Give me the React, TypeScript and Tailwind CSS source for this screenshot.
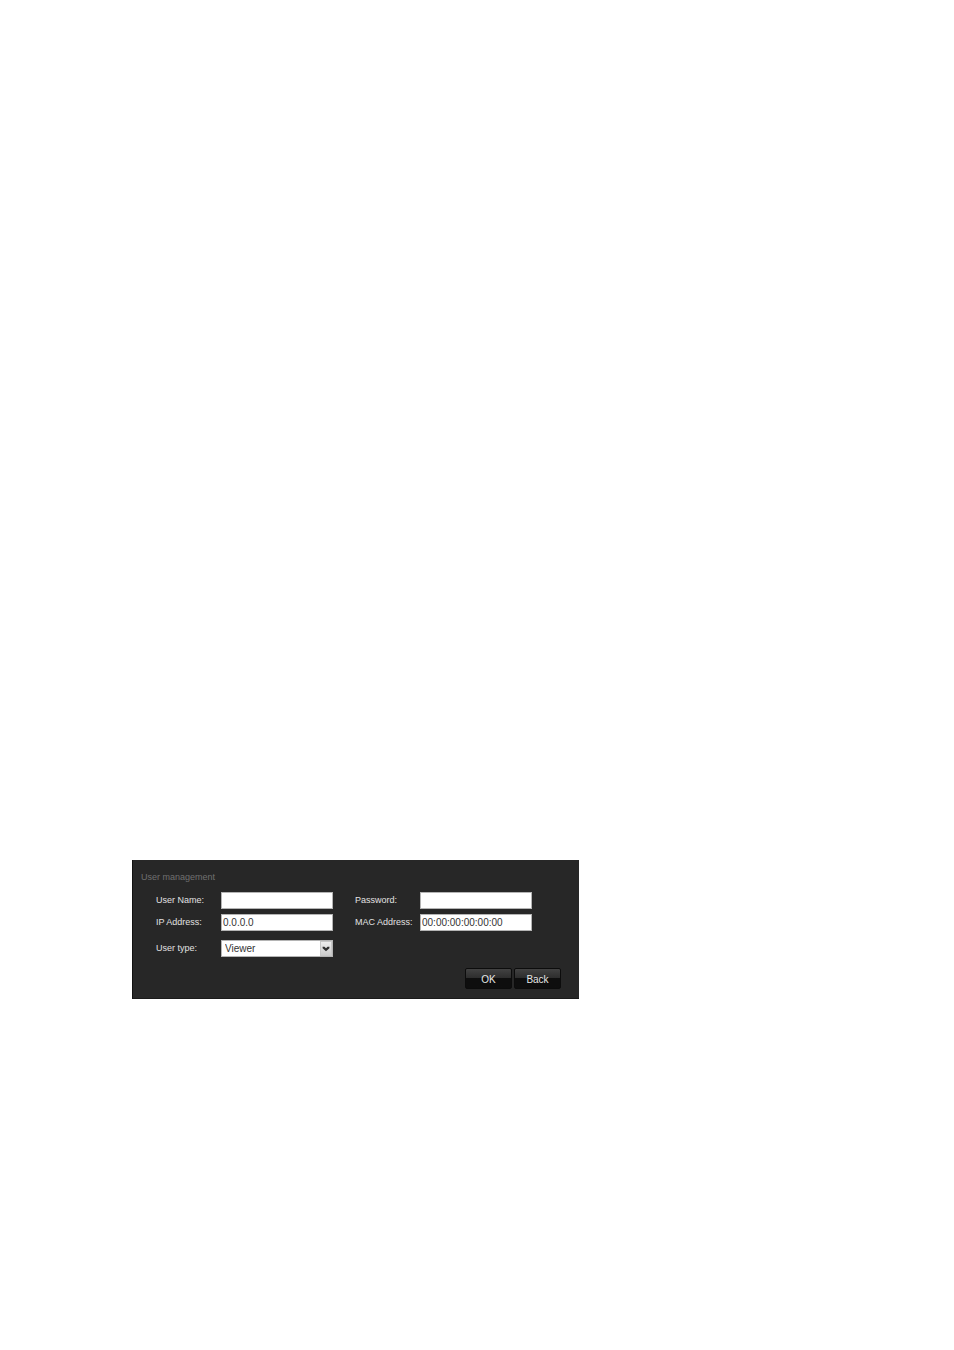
import { FormEvent, useState } from 'react';

const labelClass = 'w-[65px] shrink-0 whitespace-nowrap text-[9px] text-[#e2e2e2]';
const inputClass =
  'h-[17px] w-full min-w-0 border border-[#b4b4b4] bg-white px-px text-[10px] text-[#333333] outline-none';
const buttonClass =
  'h-[21px] w-[47px] rounded-xs border border-[#0c0c0c] bg-linear-to-b from-[#424242] from-0% via-[#2e2e2e] via-45% to-[#0e0e0e] to-50% pt-px text-[10px] text-[#e6e6e6]';

type FieldProps = {
  id: string;
  label: string;
  type?: string;
  value: string;
  onChange: (value: string) => void;
};

function Field({ id, label, type = 'text', value, onChange }: FieldProps) {
  return (
    <div className="flex items-center">
      <label htmlFor={id} className={labelClass}>
        {label}
      </label>
      <input
        id={id}
        type={type}
        className={inputClass}
        value={value}
        onChange={(event) => onChange(event.target.value)}
      />
    </div>
  );
}

export default function UserManagement() {
  const [userName, setUserName] = useState('');
  const [password, setPassword] = useState('');
  const [ipAddress, setIpAddress] = useState('0.0.0.0');
  const [macAddress, setMacAddress] = useState('00:00:00:00:00:00');
  const [userType, setUserType] = useState('Viewer');

  const handleSubmit = (event: FormEvent) => {
    event.preventDefault();
  };

  return (
    <main className="min-h-screen bg-white px-[132px] pt-[860px] font-['Liberation_Sans',Arial,sans-serif]">
      <form
        onSubmit={handleSubmit}
        className="max-w-[447px] border-b border-l border-b-[#1a1a1a] border-l-[#111111] bg-[#272727] pt-2.5 pr-[18px] pb-[9px] pl-2"
      >
        <h1 className="text-[9px] leading-[14px] text-[#707070]">User management</h1>

        <div className="mt-2 mr-[29px] ml-[15px] grid grid-cols-2 gap-x-[22px] gap-y-[5px]">
          <Field id="user-name" label="User Name:" value={userName} onChange={setUserName} />
          <Field id="password" label="Password:" type="password" value={password} onChange={setPassword} />
          <Field id="ip-address" label="IP Address:" value={ipAddress} onChange={setIpAddress} />
          <Field id="mac-address" label="MAC Address:" value={macAddress} onChange={setMacAddress} />

          <div className="mt-1 flex items-center">
            <label htmlFor="user-type" className={labelClass}>
              User type:
            </label>
            <div className="relative w-full min-w-0">
              <select
                id="user-type"
                className="block h-[17px] w-full appearance-none border border-[#b4b4b4] bg-white pr-4 pl-[3px] text-[10px] leading-[15px] text-[#333333] outline-none"
                value={userType}
                onChange={(event) => setUserType(event.target.value)}
              >
                <option>Viewer</option>
                <option>Operator</option>
                <option>Administrator</option>
              </select>
              <span className="pointer-events-none absolute inset-y-px right-px flex w-3 items-center justify-center border border-[#c8c8c8] bg-linear-to-b from-[#eeeeee] to-[#cccccc]">
                <svg viewBox="0 0 8 6" className="h-1.5 w-2 shrink-0" fill="#303030">
                  <path d="M0.6 0.8H2.4L4 2.2 5.6 0.8H7.4V2.2L4 5.2 0.6 2.2Z" />
                </svg>
              </span>
            </div>
          </div>
        </div>

        <div className="mt-[11px] flex justify-end gap-0.5">
          <button type="submit" className={buttonClass}>
            OK
          </button>
          <button type="button" className={buttonClass}>
            Back
          </button>
        </div>
      </form>
    </main>
  );
}
